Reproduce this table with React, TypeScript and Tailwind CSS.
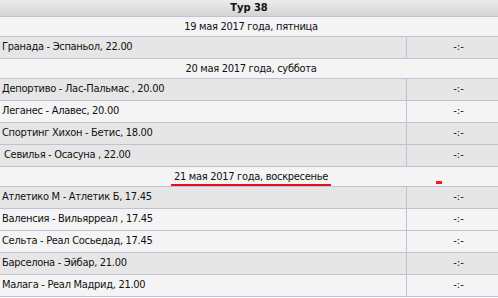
type Row =
  | { kind: "date"; text: string; mark?: boolean }
  | { kind: "match"; text: string; dark: boolean; shift?: boolean };

const ROWS: Row[] = [
  { kind: "date", text: "19 мая 2017 года, пятница" },
  { kind: "match", text: "Гранада - Эспаньол, 22.00", dark: true },
  { kind: "date", text: "20 мая 2017 года, суббота" },
  { kind: "match", text: "Депортиво - Лас-Пальмас , 20.00", dark: true },
  { kind: "match", text: "Леганес - Алавес, 20.00", dark: false },
  { kind: "match", text: "Спортинг Хихон - Бетис, 18.00", dark: true },
  { kind: "match", text: "Севилья - Осасуна , 22.00", dark: true, shift: true },
  { kind: "date", text: "21 мая 2017 года, воскресенье", mark: true },
  { kind: "match", text: "Атлетико М - Атлетик Б, 17.45", dark: true },
  { kind: "match", text: "Валенсия - Вильярреал , 17.45", dark: false },
  { kind: "match", text: "Сельта - Реал Сосьедад, 17.45", dark: false },
  { kind: "match", text: "Барселона - Эйбар, 21.00", dark: true },
  { kind: "match", text: "Малага - Реал Мадрид, 21.00", dark: false },
];

export default function App() {
  return (
    <div className="w-[498px] h-[298px] overflow-hidden bg-white text-[11px] tracking-[-0.3px] text-[#111]" style={{ fontFamily: "'DejaVu Sans Condensed', Tahoma, 'Liberation Sans', sans-serif" }}>
      <div className="h-[17px] flex items-center justify-center font-bold tracking-normal border-b border-[#c3bfd8] bg-gradient-to-b from-[#ececec] to-[#d4d4d4]">
        Тур 38
      </div>
      {ROWS.map((r) =>
        r.kind === "date" ? (
          <div key={r.text} className="relative h-[20px] flex items-center justify-center pl-[4px] pt-[1px] bg-[#f4f4f4] border-b border-[#c3bfd8]">
            {r.mark ? (
              <>
                <span className="inline-block px-[3px] leading-[15px] border-b-2 border-[#e3101c] mt-[1px]">{r.text}</span>
                <span className="absolute left-[436px] top-[14px] w-[6px] h-[3px] bg-[#ee1c25]" />
              </>
            ) : (
              r.text
            )}
          </div>
        ) : (
          <div key={r.text} className={`h-[22px] flex border-b border-[#c3bfd8] ${r.dark ? "bg-[#e6e6e6]" : "bg-[#f4f4f4]"}`}>
            <div className={`flex-1 flex items-center border-r border-[#c3bfd8] ${r.shift ? "pl-[4px]" : "pl-[2px]"}`}>{r.text}</div>
            <div className="w-[91px] flex items-center justify-center pl-[12px] tracking-normal">-:-</div>
          </div>
        )
      )}
    </div>
  );
}
